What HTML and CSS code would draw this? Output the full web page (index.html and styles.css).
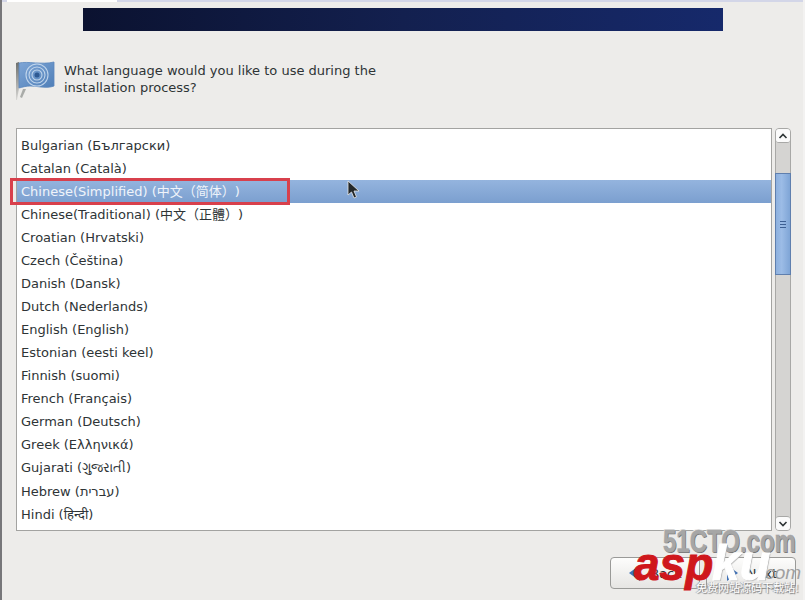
FILE: index.html
```html
<!DOCTYPE html>
<html lang="en">
<head>
<meta charset="utf-8">
<title>Language selection</title>
<link rel="stylesheet" href="styles.css">
</head>
<body>
<div class="window">
  <div class="topstrip"><div class="toptab"></div></div>
  <div class="banner"></div>
  <div class="question">
    <svg class="flag" width="40" height="42" viewBox="0 0 40 42">
      <defs>
        <linearGradient id="cloth" x1="0" y1="0" x2="1" y2="1">
          <stop offset="0" stop-color="#7fa6d6"/>
          <stop offset="1" stop-color="#4f7fb8"/>
        </linearGradient>
        <linearGradient id="pole" x1="0" y1="0" x2="0" y2="1">
          <stop offset="0" stop-color="#6d6f6c"/>
          <stop offset="1" stop-color="#d8d7d5"/>
        </linearGradient>
      </defs>
      <path d="M0 3 L3 2 L3 28 L1 40 L0 40 Z" fill="url(#pole)"/>
      <path d="M3 3 C12 1 26 5 38 2 L38 26 C30 29 22 26 14 26 C10 26 7 27 3 28 Z" fill="url(#cloth)" stroke="#5b86bd" stroke-width="0.8"/>
      <g fill="none" stroke="#cfe0f2" stroke-width="1.1" opacity="0.85">
        <circle cx="21" cy="15" r="5"/>
        <circle cx="21" cy="15" r="8"/>
        <circle cx="21" cy="15" r="11"/>
      </g>
      <circle cx="21" cy="15" r="2.5" fill="#2f5a93"/>
      <path d="M7 29 L4 37 L6 38 L10 29 Z" fill="#a9aba8"/>
    </svg>
    <p class="prompt">What language would you like to use during the<br>installation process?</p>
  </div>
  <div class="picker">
    <div class="list">
      <div class="row">Bulgarian (Български)</div>
      <div class="row">Catalan (Català)</div>
      <div class="row selected">Chinese(Simplified) (中文（简体）)<span class="marker"></span></div>
      <div class="row">Chinese(Traditional) (中文（正體）)</div>
      <div class="row">Croatian (Hrvatski)</div>
      <div class="row">Czech (Čeština)</div>
      <div class="row">Danish (Dansk)</div>
      <div class="row">Dutch (Nederlands)</div>
      <div class="row">English (English)</div>
      <div class="row">Estonian (eesti keel)</div>
      <div class="row">Finnish (suomi)</div>
      <div class="row">French (Français)</div>
      <div class="row">German (Deutsch)</div>
      <div class="row">Greek (Ελληνικά)</div>
      <div class="row row-tall">Gujarati (ગુજરાતી)</div>
      <div class="row">Hebrew (עברית)</div>
      <div class="row">Hindi (हिन्दी)</div>
    </div>
    <div class="scrollbar">
      <div class="step step-up">
        <svg width="10" height="6" viewBox="0 0 10 6"><path d="M1.5 5 L5 1.5 L8.5 5" fill="none" stroke="#2e3436" stroke-width="1.6"/></svg>
      </div>
      <div class="track">
        <div class="thumb"><span></span><span></span><span></span></div>
      </div>
      <div class="step step-down">
        <svg width="10" height="6" viewBox="0 0 10 6"><path d="M1.5 1 L5 4.5 L8.5 1" fill="none" stroke="#2e3436" stroke-width="1.6"/></svg>
      </div>
    </div>
  </div>
  <div class="actions">
    <button class="btn" type="button">
      <svg width="14" height="18" viewBox="0 0 14 18"><path d="M12 1 L1 9 L12 17 Z" fill="#3f70b5"/></svg>
      <span>Back</span>
    </button>
    <button class="btn" type="button">
      <svg width="14" height="18" viewBox="0 0 14 18"><path d="M2 1 L13 9 L2 17 Z" fill="#3f70b5"/></svg>
      <span>Next</span>
    </button>
  </div>
</div>
<svg class="cursor" width="14" height="20" viewBox="0 0 14 20"><path d="M1 1 L1 15 L4.5 12 L7 18 L9.5 17 L7 11 L12 11 Z" fill="#23282a" stroke="#e8e8e8" stroke-width="0.8"/></svg>
<div class="wm wm-cto">51CTO.com</div>
<div class="wm wm-com">.com</div>
<div class="wm wm-asp">asp</div>
<div class="wm wm-ku">ku</div>
<div class="wm wm-tag">免费网站源码下载站!</div>
</body>
</html>
```
FILE: styles.css
```css
* { box-sizing: border-box; }
html, body { margin: 0; height: 100%; overflow: hidden; }
body {
  position: relative;
  background: #f3f2f1;
  color: #2e3436;
  font-family: "DejaVu Sans", "Noto Sans", "Noto Sans CJK SC", sans-serif;
  font-size: 13px;
  text-spacing-trim: space-all;
  font-feature-settings: "chws" 0, "palt" 0;
}
.window {
  height: 600px;
  width: 803px;
  background: #edecea;
  border-left: 2px solid #77777a;
  display: flex;
  flex-direction: column;
}
.topstrip { height: 2px; background: #d3d6e8; }
.toptab { width: 110px; height: 2px; margin-left: 5px; background: #fff; }
.banner {
  width: 640px;
  height: 23px;
  margin: 6px 0 0 81px;
  background: linear-gradient(90deg, #0b1230 0%, #13204f 50%, #16296b 100%);
}
.question {
  display: flex;
  align-items: flex-start;
  gap: 8px;
  margin: 29px 0 0 14px;
}
.flag { flex: none; }
.prompt { margin: 2px 0 0; line-height: 17px; }
.picker {
  display: flex;
  gap: 3px;
  margin: 26px 0 0 14px;
}
.list {
  width: 756px;
  height: 403px;
  background: #fff;
  border: 1px solid #a3a3a1;
  padding-top: 5px;
}
.row {
  position: relative;
  height: 23px;
  line-height: 24px;
  padding-left: 4px;
  white-space: nowrap;
}
.row-tall { height: 24px; }
.selected {
  background: linear-gradient(180deg, #94b4de, #7b9fcf);
  color: #f0f4fa;
}
.marker {
  position: absolute;
  left: -7px;
  top: -2px;
  width: 280px;
  height: 27px;
  border: 3px solid #d8404c;
}
.scrollbar {
  width: 16px;
  height: 403px;
  display: flex;
  flex-direction: column;
  background: #d5d4d2;
  border: 1px solid #a8a8a6;
  border-radius: 4px;
}
.step {
  flex: none;
  height: 14px;
  background: #fbfbfb;
  display: flex;
  align-items: center;
  justify-content: center;
  border-radius: 3px;
}
.step-up { border-bottom: 1px solid #a8a8a6; }
.step-down { border-top: 1px solid #a8a8a6; }
.track { flex: 1; padding-top: 30px; }
.thumb {
  height: 102px;
  margin: 0 -1px;
  background: linear-gradient(90deg, #8db0de, #9cbce6 40%, #7fa5d6);
  border: 1px solid #5f7fae;
  display: flex;
  flex-direction: column;
  align-items: center;
  justify-content: center;
  gap: 2px;
}
.thumb span { width: 6px; height: 1px; background: #3d5f92; }
.actions {
  display: flex;
  gap: 6px;
  margin: 26px 0 0 608px;
}
.btn {
  display: flex;
  align-items: center;
  justify-content: center;
  gap: 8px;
  width: 90px;
  height: 32px;
  background: linear-gradient(180deg, #fdfdfc, #e6e5e3);
  border: 1px solid #9a9a98;
  border-radius: 4px;
  color: #2e3436;
  font: inherit;
  padding: 0;
}
.cursor { position: absolute; left: 347px; top: 180px; }
.wm { position: absolute; white-space: nowrap; }
.wm-cto {
  left: 663px;
  top: 524px;
  font: bold 32px/34px "Liberation Sans", sans-serif;
  color: #a6a6a6;
  -webkit-text-stroke: 0.6px #a6a6a6;
  text-shadow: 1px 1px 0 #6f6f6f, -1px -1px 0 #e8e8e8;
  transform: scaleX(0.75);
  transform-origin: left center;
}
.wm-com {
  left: 760px;
  top: 560px;
  font: italic 19px/26px "Liberation Sans", sans-serif;
  color: #a0a0a0;
}
.wm-asp {
  left: 634px;
  top: 539px;
  font: italic bold 46px/50px "Liberation Sans", sans-serif;
  color: #cf171c;
  -webkit-text-stroke: 1px #cf171c;
}
.wm-ku {
  left: 712px;
  top: 536px;
  font: italic bold 50px/54px "Liberation Sans", sans-serif;
  color: #fff;
  -webkit-text-stroke: 1px #fff;
  text-shadow: 1px 1px 1px #aaa;
}
.wm-tag {
  left: 696px;
  top: 580px;
  font: 11px/14px "Noto Sans CJK SC", sans-serif;
  color: #fff;
  text-shadow: 1px 1px 1px #777, -1px 0 1px #999;
}
```
